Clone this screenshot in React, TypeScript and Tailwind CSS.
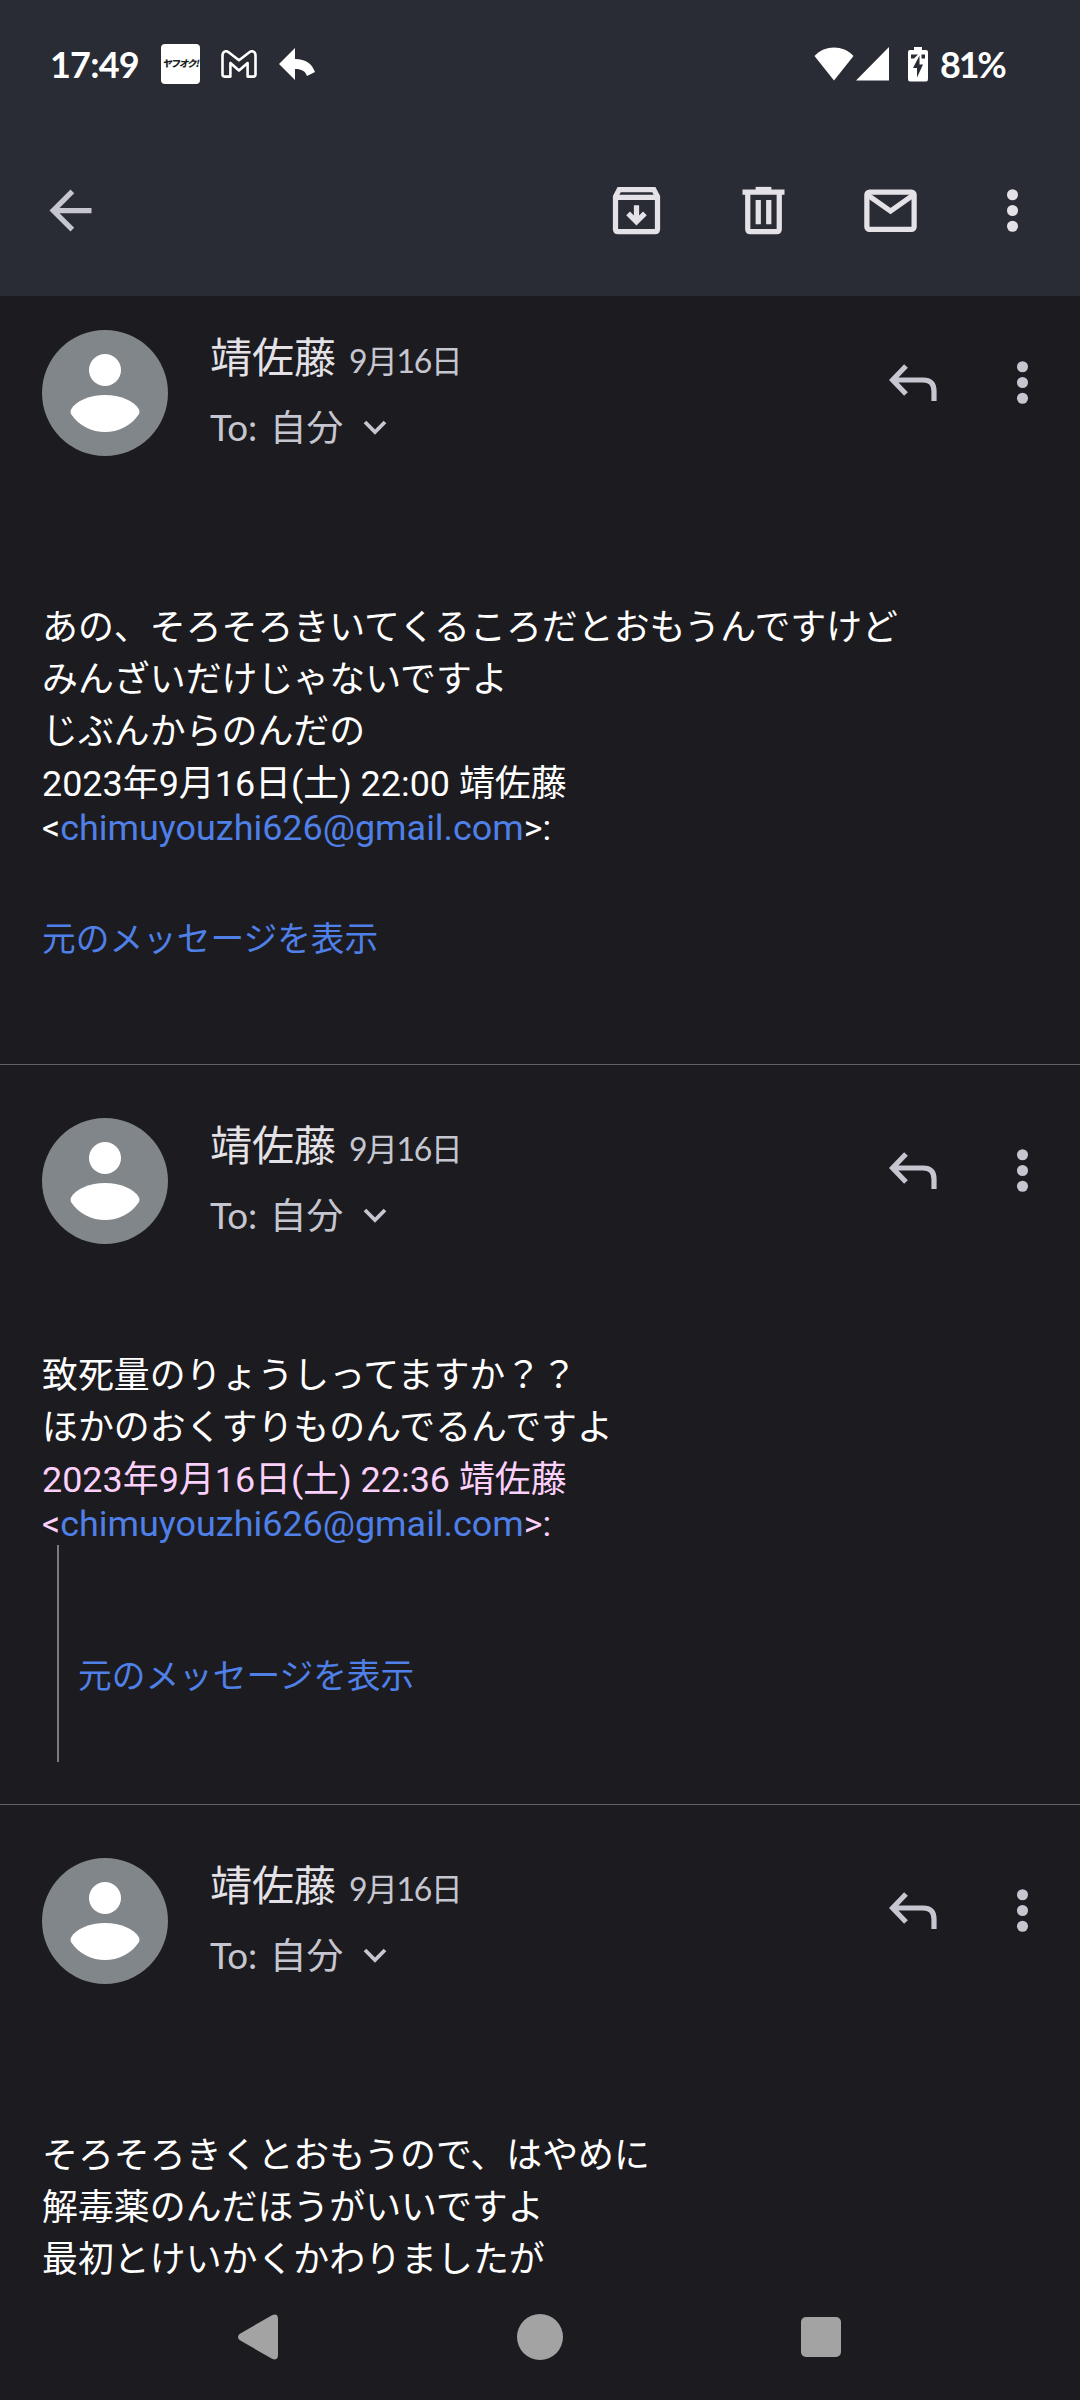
import React from "react";

const uiFont = "font-['Lato','Noto_Sans_CJK_JP',sans-serif]";
const bodyFont = "font-['Roboto','Noto_Sans_CJK_JP',sans-serif]";

function StatusBar() {
  return (
    <div className="flex h-[126px] items-center pt-0.5 pl-[50px] pr-[74px] text-white">
      <span className={`${uiFont} w-[111px] text-[36px] font-bold leading-none tracking-[-0.8px]`}>17:49</span>
      <div className="flex h-10 w-[39px] items-center justify-center rounded-[4px] bg-white">
        <span className="-skew-x-12 whitespace-nowrap text-[9.500px] leading-none font-black tracking-[-1.200px] text-[#1c1f26] font-['Noto_Sans_CJK_JP',sans-serif]">
          ヤフオク!
        </span>
      </div>
      <svg className="ml-[21px] h-7 w-9" viewBox="0 0 36 28" fill="none" stroke="white" strokeWidth="2.6" strokeLinejoin="round">
        <path d="M1.500 5.400C1.500 1.600 5 .2 7.600 2.200L18 10.200 28.400 2.200C31 .2 34.500 1.600 34.500 5.400V24.600Q34.500 26.600 32.500 26.600H26.600V13L18 20.500 9.400 13V26.600H3.500Q1.500 26.600 1.500 24.600Z" />
      </svg>
      <svg className="ml-[22px] h-8 w-9" viewBox="0 0 36 32" fill="white">
        <path d="M16 0V11C27 11 33 16 36 24L28 28C26 23 23 21 16 21V32L0 16Z" />
      </svg>
      <div className="ml-auto flex items-center">
        <svg className="h-[34px] w-10" viewBox="0 0 40 34" fill="white">
          <path d="M20 33.500 .5 9C11-2.300 29-2.300 39.500 9Z" />
        </svg>
        <svg className="ml-0.5 h-[34px] w-[33px]" viewBox="0 0 33 34" fill="white">
          <path d="M33 0V33.500H0Z" />
        </svg>
        <svg className="ml-[19px] h-[35px] w-5" viewBox="0 0 20 35">
          <path d="M6 0h8v3h4q2 0 2 2v27q0 2.500-2 2.500H2q-2 0-2-2.500V5q0-2 2-2h4Z" fill="white" />
          <path d="M3 7.500H10L6 11.500H3ZM13.500 7.500H17V11.500H13.500ZM11.500 8.500 5 21H9V30.500L15 17.500H11.500Z" fill="#292c34" />
        </svg>
        <span className={`${uiFont} ml-3 w-[66px] whitespace-nowrap text-[36px] font-bold leading-none tracking-[-2.200px]`}>81%</span>
      </div>
    </div>
  );
}

function MoreIcon() {
  return (
    <svg className="size-[63px]" viewBox="0 0 24 24" fill="currentColor">
      <circle cx="12" cy="6" r="2.1" />
      <circle cx="12" cy="12" r="2.1" />
      <circle cx="12" cy="18" r="2.1" />
    </svg>
  );
}

function Toolbar() {
  return (
    <div className="flex h-[169px] items-center pl-[39px] pr-[36px] text-[#e4e2e6]">
      <svg className="size-[63px] text-[#c5c6d0]" viewBox="0 0 24 24" fill="currentColor">
        <path d="M20 11H7.830l5.590-5.590L12 4l-8 8 8 8 1.410-1.410L7.830 13H20v-2z" />
      </svg>
      <svg className="ml-auto size-[63px]" viewBox="0 0 24 24" fill="none" stroke="currentColor" strokeWidth="2">
        <path d="M4 6.700 5.400 4H18.600L20 6.700V19Q20 20 19 20H5Q4 20 4 19Z" />
        <path d="M4 7H20" />
        <path d="M12 10V15M8.800 13.100 12 16.300 15.200 13.100" />
      </svg>
      <svg className="ml-16 size-[63px]" viewBox="0 0 24 24" fill="none" stroke="currentColor" strokeWidth="2">
        <path d="M4 5H20" />
        <path d="M9 4H15" />
        <path d="M6 5V19Q6 20 7 20H17Q18 20 18 19V5M10 8V17.200M14 8V17.200" />
      </svg>
      <svg className="ml-16 size-[63px]" viewBox="0 0 24 24" fill="none" stroke="currentColor" strokeWidth="2">
        <rect x="3" y="5" width="18" height="14.200" rx="1" />
        <path d="M3.500 6.200 12 12.200 20.500 6.200" />
      </svg>
      <div className="ml-[59px]">
        <MoreIcon />
      </div>
    </div>
  );
}

function Avatar() {
  return (
    <svg className="size-[126px]" viewBox="0 0 126 126">
      <circle cx="63" cy="63" r="63" fill="#80868a" />
      <circle cx="63" cy="40" r="16" fill="white" />
      <path d="M63 65C78 65 92 70.500 97 79.500Q98 82 97 84C89 96 76 102 63 102S37 96 29 84Q28 82 29 79.500C34 70.500 48 65 63 65Z" fill="white" />
    </svg>
  );
}

function MessageHeader() {
  return (
    <header className="flex h-[126px] items-start pl-[42px] pr-[26px] text-[#c5c6d0]">
      <Avatar />
      <div className={`${uiFont} ml-[42px] flex flex-col`}>
        <div className="-mt-px flex items-baseline leading-[56px]">
          <span className="text-[42px] text-[#e4e2e6]">靖佐藤</span>
          <span className="ml-[13px] text-[32px] tracking-[-1.500px]">9月16日</span>
        </div>
        <div className="mt-2.5 flex items-center leading-[56px]">
          <span className="text-[36.750px] [word-spacing:3px]">To: 自分</span>
          <svg className="ml-[20px] h-[15px] w-6" viewBox="0 0 24 15" fill="none" stroke="currentColor" strokeWidth="3.800">
            <path d="M2 2 12 12 22 2" />
          </svg>
        </div>
      </div>
      <svg className="mt-[34px] ml-auto h-[38px] w-12" viewBox="0 0 48 38" fill="none" stroke="currentColor" strokeWidth="5.200">
        <path d="M17 2 3.500 16 17 30M4 16H34Q45 16 45 27V37" />
      </svg>
      <div className="mt-[21px] ml-[54px]">
        <MoreIcon />
      </div>
    </header>
  );
}

function Sender({ time }: { time: string }) {
  return (
    <div className="mt-1 leading-[44px]">
      <p>2023年9月16日(土) {time} 靖佐藤</p>
      <p>
        &lt;<a className="text-[#4f80e8]">chimuyouzhi626@gmail.com</a>&gt;:
      </p>
    </div>
  );
}

function ShowOriginal() {
  return <a className="block text-[33.700px] leading-[52px] text-[#4f80e8]">元のメッセージを表示</a>;
}

const body = `${bodyFont} pl-[42px] text-[35.920px] leading-[52px] text-white`;

export default function App() {
  return (
    <div className="flex h-[2400px] w-[1080px] flex-col overflow-hidden bg-[#1c1b1f]">
      <div className="h-[296px] bg-[#292c34]">
        <StatusBar />
        <Toolbar />
      </div>

      <article className="h-[769px] border-b border-[#616166] pt-[34px]">
        <MessageHeader />
        <div className={`${body} pt-[146px]`}>
          <p>あの、そろそろきいてくるころだとおもうんですけど</p>
          <p>みんざいだけじゃないですよ</p>
          <p>じぶんからのんだの</p>
          <Sender time="22:00" />
          <div className="pt-[64px]">
            <ShowOriginal />
          </div>
        </div>
      </article>

      <article className="h-[740px] border-b border-[#616166] pt-[53px]">
        <MessageHeader />
        <div className={`${body} pt-[106px]`}>
          <p>致死量のりょうしってますか？？</p>
          <p>ほかのおくすりものんでるんですよ</p>
          <div className="text-[#fbd0fb]">
            <Sender time="22:36" />
          </div>
          <blockquote className="-mt-px ml-[15px] h-[217px] border-l-2 border-[#7c7c7c] pt-[106px] pl-[19px]">
            <ShowOriginal />
          </blockquote>
        </div>
      </article>

      <article className="h-[465px] shrink-0 pt-[53px]">
        <MessageHeader />
        <div className={`${body} pt-[146px]`}>
          <p>そろそろきくとおもうので、はやめに</p>
          <p>解毒薬のんだほうがいいですよ</p>
          <p>最初とけいかくかわりましたが</p>
        </div>
      </article>

      <nav className="flex h-[130px] items-center justify-between pt-1 pr-[239px] pl-[238px]">
        <svg className="h-[46px] w-10" viewBox="0 0 40 46" fill="#a3a3a3">
          <path d="M1.500 20 34 1.200Q40-1 40 5V41Q40 47 34 44.800L1.500 26Q-1.500 23 1.500 20Z" />
        </svg>
        <div className="size-[46px] rounded-full bg-[#a3a3a3]" />
        <div className="h-10 w-10 rounded-[5px] bg-[#a3a3a3]" />
      </nav>
    </div>
  );
}
